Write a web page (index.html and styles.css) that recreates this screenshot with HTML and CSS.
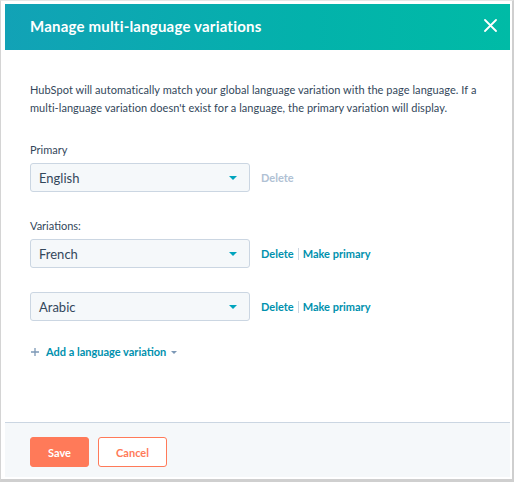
FILE: index.html
```html
<!DOCTYPE html>
<html lang="en">
<head>
<meta charset="utf-8">
<title>Manage multi-language variations</title>
<link rel="stylesheet" href="styles.css">
</head>
<body>
<div class="frame">
  <div class="modal">
    <header class="modal-header">
      <h1 class="modal-title">Manage multi-language variations</h1>
      <button class="close-btn" aria-label="Close">
        <svg width="13" height="13" viewBox="0 0 13 13"><path d="M1 1 L12 12 M12 1 L1 12" stroke="#fff" stroke-width="1.8" stroke-linecap="round"/></svg>
      </button>
    </header>
    <div class="modal-body">
      <p class="intro">HubSpot will automatically match your global language variation with the page language. If a multi-language variation doesn't exist for a language, the primary variation will display.</p>

      <div class="group group-primary">
        <div class="label">Primary</div>
        <div class="row">
          <div class="select"><span>English</span><span class="caret"></span></div>
          <div class="actions"><span class="link disabled">Delete</span></div>
        </div>
      </div>

      <div class="group group-variations">
        <div class="label">Variations:</div>
        <div class="row">
          <div class="select"><span>French</span><span class="caret"></span></div>
          <div class="actions"><span class="link">Delete</span><span class="sep"></span><span class="link">Make primary</span></div>
        </div>
        <div class="row row-next">
          <div class="select"><span>Arabic</span><span class="caret"></span></div>
          <div class="actions"><span class="link">Delete</span><span class="sep"></span><span class="link">Make primary</span></div>
        </div>
      </div>

      <div class="add-link">
        <svg class="plus" width="8" height="8" viewBox="0 0 8 8"><path d="M4 0 V8 M0 4 H8" stroke="#7c98b6" stroke-width="1.3"/></svg>
        <span class="link">Add a language variation</span>
        <span class="caret small"></span>
      </div>
    </div>
    <footer class="modal-footer">
      <button class="btn btn-primary">Save</button>
      <button class="btn btn-secondary">Cancel</button>
    </footer>
  </div>
</div>
</body>
</html>
```

FILE: styles.css
```css
* { box-sizing: border-box; }
html, body { margin: 0; padding: 0; background: #fff; }
body { font-family: "Lato", "Open Sans", sans-serif; color: #33475b; }

.frame {
  width: 514px;
  height: 482px;
  border-left: 1px solid #d4d4d4;
  border-top: 1px solid #e6e6e6;
  border-right: 2px solid #cfcfcf;
  border-bottom: 3px solid #cfcfcf;
  padding: 3px 3px 2px 4px;
}

.modal {
  width: 505px;
  height: 473px;
  display: flex;
  flex-direction: column;
  background: #fff;
}

.modal-header {
  height: 46px;
  flex: none;
  display: flex;
  align-items: center;
  justify-content: space-between;
  padding: 0 12px 0 25px;
  background: linear-gradient(90deg, #12a2b6 0%, #03b2ab 60%, #00bba6 100%);
}
.modal-title {
  margin: 0;
  margin-top: -2px;
  font-size: 15px;
  font-weight: 700;
  color: #fff;
  letter-spacing: 0.2px;
}
.close-btn {
  border: 0;
  background: none;
  padding: 0;
  width: 16px;
  height: 16px;
  display: flex;
  align-items: center;
  justify-content: center;
  margin-top: -4px;
}

.modal-body {
  flex: 1;
  padding: 31px 25px 0 25px;
}

.intro {
  margin: 0;
  font-size: 11px;
  line-height: 18px;
  letter-spacing: 0.05px;
}

.label {
  font-size: 11px;
  line-height: 16px;
  margin-bottom: 5px;
}
.group-primary { margin-top: 25px; }
.group-variations { margin-top: 26px; }

.row {
  display: flex;
  align-items: center;
}
.row-next { margin-top: 24px; }

.select {
  width: 220px;
  height: 29px;
  border: 1px solid #cbd6e2;
  border-radius: 3px;
  background: #f5f8fa;
  display: flex;
  align-items: center;
  justify-content: space-between;
  padding: 0 12px 0 8px;
  font-size: 13px;
}
.caret {
  width: 0;
  height: 0;
  border-left: 4.5px solid transparent;
  border-right: 4.5px solid transparent;
  border-top: 4.5px solid #00a4bd;
}
.caret.small {
  border-left-width: 3px;
  border-right-width: 3px;
  border-top: 3px solid #7c98b6;
  margin-left: 5px;
}

.actions {
  display: flex;
  align-items: center;
  margin-left: 11px;
  font-size: 11px;
}
.link {
  color: #0091ae;
  font-weight: 700;
}
.link.disabled { color: #b0c1d4; }
.sep {
  width: 1px;
  height: 12px;
  background: #cbd6e2;
  margin: 0 4px;
}

.add-link {
  margin-top: 22px;
  display: flex;
  align-items: center;
  font-size: 11px;
  line-height: 18px;
  padding-left: 1px;
}
.plus { margin-right: 7px; }

.modal-footer {
  height: 55px;
  flex: none;
  border-top: 1px solid #cbd6e2;
  background: #f5f8fa;
  display: flex;
  align-items: flex-start;
  padding: 14px 25px 0 25px;
  gap: 9px;
}
.btn {
  height: 30px;
  border-radius: 3px;
  font-family: inherit;
  font-size: 11px;
  font-weight: 700;
  padding: 0;
}
.btn-primary {
  width: 59px;
  background: #ff7a59;
  border: 1px solid #ff7a59;
  color: #fff;
}
.btn-secondary {
  width: 69px;
  background: #fff;
  border: 1px solid #ff7a59;
  color: #ff7a59;
}
```
